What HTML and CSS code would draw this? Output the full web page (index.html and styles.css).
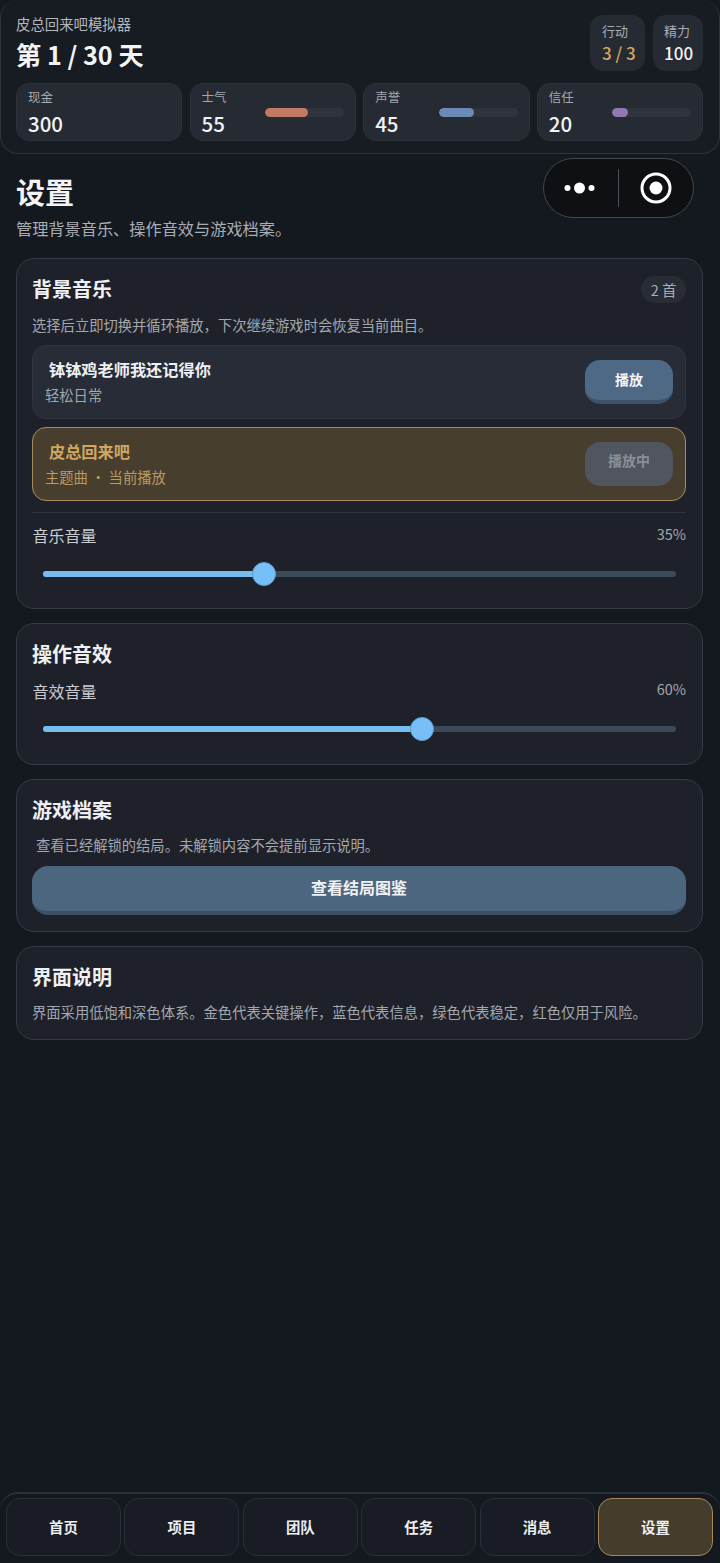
FILE: index.html
```html
<!DOCTYPE html>
<html lang="zh-CN">
<head>
<meta charset="utf-8">
<title>设置</title>
<link rel="stylesheet" href="styles.css">
</head>
<body>
<div class="app">
  <header class="top">
    <div class="top-row">
      <div class="game">
        <div class="game-name">皮总回来吧模拟器</div>
        <div class="game-day">第 1 / 30 天</div>
      </div>
      <div class="chips">
        <div class="chip chip-action"><span class="chip-label">行动</span><span class="chip-value gold">3 / 3</span></div>
        <div class="chip chip-energy"><span class="chip-label">精力</span><span class="chip-value">100</span></div>
      </div>
    </div>
    <div class="stats">
      <div class="stat"><div class="stat-text"><span class="stat-label">现金</span><span class="stat-value">300</span></div></div>
      <div class="stat"><div class="stat-text"><span class="stat-label">士气</span><span class="stat-value">55</span></div><div class="bar"><div class="fill fill-red" style="width:55%"></div></div></div>
      <div class="stat"><div class="stat-text"><span class="stat-label">声誉</span><span class="stat-value">45</span></div><div class="bar"><div class="fill fill-blue" style="width:45%"></div></div></div>
      <div class="stat"><div class="stat-text"><span class="stat-label">信任</span><span class="stat-value">20</span></div><div class="bar"><div class="fill fill-purple" style="width:20%"></div></div></div>
    </div>
  </header>

  <div class="capsule">
    <svg class="cap-dots" width="32" height="14" viewBox="0 0 32 14"><circle cx="3.500" cy="7" r="3" fill="#fff"/><circle cx="15.500" cy="7" r="5.500" fill="#fff"/><circle cx="27.500" cy="7" r="3" fill="#fff"/></svg>
    <span class="cap-line"></span>
    <svg class="cap-rec" width="32" height="32" viewBox="0 0 32 32"><circle cx="16" cy="16" r="14" fill="none" stroke="#fff" stroke-width="3"/><circle cx="16" cy="16" r="6.500" fill="#fff"/></svg>
  </div>

  <main class="main">
    <h1 class="page-title">设置</h1>
    <p class="page-sub">管理背景音乐、操作音效与游戏档案。</p>

    <section class="card card-music">
      <div class="card-head">
        <h2 class="card-title">背景音乐</h2>
        <span class="pill">2 首</span>
      </div>
      <p class="note note-music">选择后立即切换并循环播放，下次继续游戏时会恢复当前曲目。</p>
      <div class="track">
        <div class="track-info"><div class="track-name">钵钵鸡老师我还记得你</div><div class="track-meta">轻松日常</div></div>
        <div class="btn-play">播放</div>
      </div>
      <div class="track track-on">
        <div class="track-info"><div class="track-name">皮总回来吧</div><div class="track-meta">主题曲 · 当前播放</div></div>
        <div class="btn-playing">播放中</div>
      </div>
      <div class="divider"></div>
      <div class="vol-head"><span class="vol-label">音乐音量</span><span class="vol-num">35%</span></div>
      <div class="slider"><div class="slider-fill" style="width:35%"><span class="thumb"></span></div></div>
    </section>

    <section class="card card-fx">
      <h2 class="card-title">操作音效</h2>
      <div class="vol-head vol-fx"><span class="vol-label">音效音量</span><span class="vol-num">60%</span></div>
      <div class="slider"><div class="slider-fill" style="width:60%"><span class="thumb"></span></div></div>
    </section>

    <section class="card card-save">
      <h2 class="card-title">游戏档案</h2>
      <p class="note note-save">查看已经解锁的结局。未解锁内容不会提前显示说明。</p>
      <div class="btn-wide">查看结局图鉴</div>
    </section>

    <section class="card card-ui">
      <h2 class="card-title">界面说明</h2>
      <p class="note note-ui">界面采用低饱和深色体系。金色代表关键操作，蓝色代表信息，绿色代表稳定，红色仅用于风险。</p>
    </section>
  </main>

  <nav class="nav">
    <div class="tab">首页</div>
    <div class="tab">项目</div>
    <div class="tab">团队</div>
    <div class="tab">任务</div>
    <div class="tab">消息</div>
    <div class="tab tab-on">设置</div>
  </nav>
</div>
</body>
</html>
```
FILE: styles.css
```css
* { box-sizing: border-box; }
html, body { margin: 0; padding: 0; }
body {
  background: #14181f;
  font-family: "Noto Sans CJK SC", "Noto Sans", sans-serif;
  color: #eef0f3;
}
.app {
  position: relative;
  width: 720px;
  height: 1563px;
  display: flex;
  flex-direction: column;
  background: #14181f;
}
.top {
  height: 154px;
  padding: 14px 16px 0 15px;
  background: #171b22;
  border: 1px solid #2f343c;
  border-top: 0;
  border-radius: 18px;
  flex: none;
}
.top-row { display: flex; justify-content: space-between; height: 69px; }
.game-name { font-size: 14.400px; line-height: 20px; color: #b3b7bd; }
.game-day { font-size: 25.200px; line-height: 36px; font-weight: 700; color: #f3f4f6; margin-top: 2px; }
.chips { display: flex; gap: 8px; height: 56px; margin-top: 1px; }
.chip {
  display: flex; flex-direction: column;
  background: #262a33; border-radius: 13px; padding: 7px 0 0 12px;
}
.chip-action { width: 55px; }
.chip-energy { width: 50px; padding-left: 11px; }
.chip-label { font-size: 13px; line-height: 18px; color: #a9adb4; }
.chip-value { font-size: 17px; line-height: 22px; font-weight: 500; color: #f1f2f4; margin-top: 2px; }
.gold { color: #d1a85e; }
.stats { display: grid; grid-template-columns: repeat(4, 166.400px); gap: 7.200px; }
.stat {
  height: 58px; display: flex; justify-content: space-between;
  background: #262a33; border: 1px solid #2d323a; border-radius: 13px;
  padding: 4px 11px 0;
}
.stat-text { display: flex; flex-direction: column; }
.stat-label { font-size: 12.500px; line-height: 17px; color: #a3a7ae; }
.stat-value { font-size: 20.500px; line-height: 28px; font-weight: 500; color: #f1f2f4; margin-top: 4px; }
.bar { width: 79px; height: 9px; margin-top: 20px; background: #2f333c; border-radius: 5px; overflow: hidden; }
.fill { height: 100%; border-radius: 5px; }
.fill-red { background: #c27a66; }
.fill-blue { background: #6c8ab8; }
.fill-purple { background: #9278b3; }

.capsule {
  position: absolute; left: 543px; top: 158px;
  width: 151px; height: 60px;
  display: flex; align-items: center;
  background: #0e1014; border: 1.500px solid #43464b; border-radius: 30px;
}
.cap-dots { margin-left: 19.500px; }
.cap-line { width: 1px; height: 38px; background: #4b4e52; margin-left: 22px; }
.cap-rec { margin-left: 21.500px; }

.main { flex: 1; padding: 0 17px 0 16px; display: flex; flex-direction: column; }
.page-title { margin: 18px 0 0; font-size: 29px; line-height: 38px; font-weight: 700; color: #f3f4f6; }
.page-sub { margin: 7px 0 0; font-size: 16.200px; line-height: 22px; color: #a9adb4; }
.card {
  background: #1e212a; border: 1.500px solid #363a42; border-radius: 18px;
  padding: 0 16px 0 15px; margin-top: 14px;
}
.card-music { margin-top: 19px; height: 351px; }
.card-fx { height: 142px; }
.card-save { height: 153px; }
.card-ui { height: 94px; }
.card-head { display: flex; justify-content: space-between; }
.card-title { margin: 14px 0 0; font-size: 20px; line-height: 31px; font-weight: 700; color: #eef0f3; }
.pill {
  margin-top: 17px; height: 27px; width: 45px;
  text-align: center; font-size: 14.400px; line-height: 27px; color: #a9adb4;
  background: #282c35; border-radius: 14px;
}
.note { margin: 0; font-size: 14.300px; line-height: 20px; color: #a3a7ae; }
.note-music { margin-top: 11px; }
.track {
  height: 74px; margin-top: 10px; display: flex; justify-content: space-between;
  padding: 14px 12px 0 12px; background: #282c36; border: 1px solid #30343d; border-radius: 14px;
}
.track-on { height: 74px; margin-top: 8px; background: #483e2e; border: 1.500px solid #a88d5c; }
.track-name { font-size: 16.200px; line-height: 22px; font-weight: 700; color: #eef0f3; padding-left: 4px; margin-top: -2px; }
.track-on .track-name { color: #cfa662; }
.track-meta { font-size: 14.300px; line-height: 20px; color: #a3a7ae; margin-top: 5px; }
.track-on .track-meta { color: #b89a62; }
.btn-play {
  width: 88px; height: 44px; text-align: center; font-size: 14px; line-height: 38px; font-weight: 700;
  color: #f3f4f6; background: #4e6985; border-radius: 15px;
  border-bottom: 4px solid #3e5268;
}
.btn-playing {
  width: 88px; height: 44px; text-align: center; font-size: 14px; line-height: 37px; font-weight: 700;
  color: #8a8f96; background: #50555f; border-radius: 15px;
}
.divider { height: 1px; background: #30343c; margin-top: 11px; }
.vol-head { display: flex; justify-content: space-between; margin-top: 9px; height: 27px; }
.vol-fx { margin-top: 9px; height: 26px; }
.vol-label { font-size: 16px; line-height: 26px; color: #c9ccd1; padding-left: 0.500px; }
.vol-num { font-size: 14.400px; line-height: 24px; color: #a3a7ae; }
.vol-fx .vol-num { line-height: 22px; }
.slider { height: 6px; margin: 21.500px 10.500px 0; background: #3a4a58; border-radius: 3px; position: relative; }
.slider-fill { height: 100%; background: #76bdf0; border-radius: 3px; position: relative; }
.thumb {
  position: absolute; right: -12px; top: -9px; width: 24px; height: 24px;
  border-radius: 50%; background: #76c0f7; border: 1.500px solid #5d9cc9;
}
.note-save { margin-top: 10px; padding-left: 4px; }
.btn-wide {
  height: 49px; margin-top: 11px; text-align: center; font-size: 16px; line-height: 42px; font-weight: 700;
  color: #f0f1f3; background: #4d6680; border-bottom: 4px solid #3c5066; border-radius: 16px;
}
.note-ui { margin-top: 10px; }
.nav {
  height: 71px; flex: none; display: flex; gap: 3.400px;
  padding: 4px 6px 0; background: #14181f;
  border-top: 2px solid #2c3038; border-radius: 18px 18px 0 0;
}
.tab {
  width: 115px; height: 58px; text-align: center; font-size: 14.400px; line-height: 55px; font-weight: 700;
  color: #eceef1; background: #191c24; border: 1.500px solid #2a2e36; border-radius: 14px;
}
.tab-on { background: #453c2e; border-color: #a38a5c; }
```
